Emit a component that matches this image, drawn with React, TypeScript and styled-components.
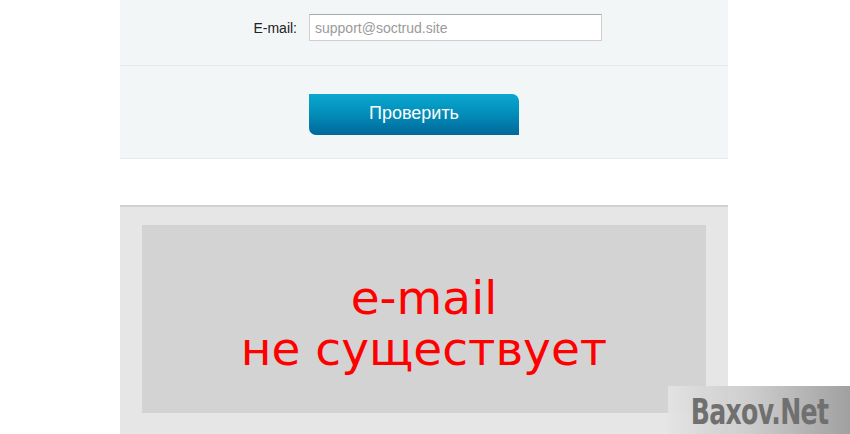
import React from 'react'
import styled, { createGlobalStyle } from 'styled-components'

const GlobalStyle = createGlobalStyle`
  html, body {
    margin: 0;
    padding: 0;
    background: #ffffff;
    font-family: 'Liberation Sans', Arial, sans-serif;
  }
`

const Page = styled.div`
  position: relative;
  width: 850px;
  height: 434px;
  overflow: hidden;
  background: #ffffff;
`

const Panel = styled.div`
  width: 608px;
  margin-left: 120px;
  background: #f3f6f7;
`

const Section = styled.div<{ padTop: number; padBottom: number }>`
  display: grid;
  grid-template-columns: 177px 1fr;
  column-gap: 12px;
  align-items: center;
  padding: ${({ padTop, padBottom }) => `${padTop}px 0 ${padBottom}px`};
  border-bottom: 1px solid #e2eaeb;
`

const Label = styled.label`
  text-align: right;
  font-size: 14px;
  color: #222;
`

const Input = styled.input`
  box-sizing: border-box;
  width: 293px;
  height: 27px;
  padding: 0 5px;
  border: 1px solid #cfcfcf;
  border-top-color: #a8a8a8;
  background: #fff;
  font-family: 'Liberation Sans', Arial, sans-serif;
  font-size: 14px;
  color: #333;
  outline: none;

  &::placeholder {
    color: #9a9a9a;
  }
`

const CheckButton = styled.button`
  grid-column: 2;
  width: 210px;
  height: 41px;
  padding: 0 0 2px;
  border: none;
  border-radius: 0 7px 0 7px;
  background: linear-gradient(180deg, #0aa7cf 0%, #0390bb 45%, #00689a 100%);
  color: #fff;
  font-family: 'Liberation Sans', Arial, sans-serif;
  font-size: 18px;
  cursor: pointer;
`

const Notice = styled.div`
  width: 564px;
  margin: 46px 0 0 120px;
  padding: 18px 22px 22px;
  background: #e6e6e6;
  border-top: 2px solid #d0d0d0;
`

const NoticeInner = styled.div`
  height: 188px;
  display: flex;
  flex-direction: column;
  align-items: center;
  justify-content: center;
  background: #d3d3d3;
  color: #ff0000;
  font-family: 'DejaVu Sans', Verdana, sans-serif;
  font-size: 47px;
  line-height: 51px;
  padding-top: 8px;
  box-sizing: border-box;
`

const Watermark = styled.div`
  position: absolute;
  right: 0;
  bottom: 0;
  width: 182px;
  height: 48px;
  display: flex;
  align-items: center;
  justify-content: center;
  background: linear-gradient(90deg, rgba(228, 228, 228, 0.9) 0%, rgba(200, 200, 200, 0.9) 45%, rgba(150, 150, 150, 0.9) 100%);
  color: #707070;
  font-family: 'DejaVu Sans', sans-serif;
  font-weight: bold;
  font-size: 35px;
  letter-spacing: -1px;
`

const WatermarkText = styled.span`
  display: inline-block;
  transform: scaleX(0.72);
  margin-top: 4px;
`

export default function App() {
  return (
    <Page>
      <GlobalStyle />
      <Panel>
        <Section padTop={14} padBottom={24}>
          <Label>E-mail:</Label>
          <Input placeholder="support@soctrud.site" />
        </Section>
        <Section padTop={28} padBottom={23}>
          <CheckButton>Проверить</CheckButton>
        </Section>
      </Panel>
      <Notice>
        <NoticeInner>
          <div>e-mail</div>
          <div>не существует</div>
        </NoticeInner>
      </Notice>
      <Watermark>
        <WatermarkText>Baxov.Net</WatermarkText>
      </Watermark>
    </Page>
  )
}
